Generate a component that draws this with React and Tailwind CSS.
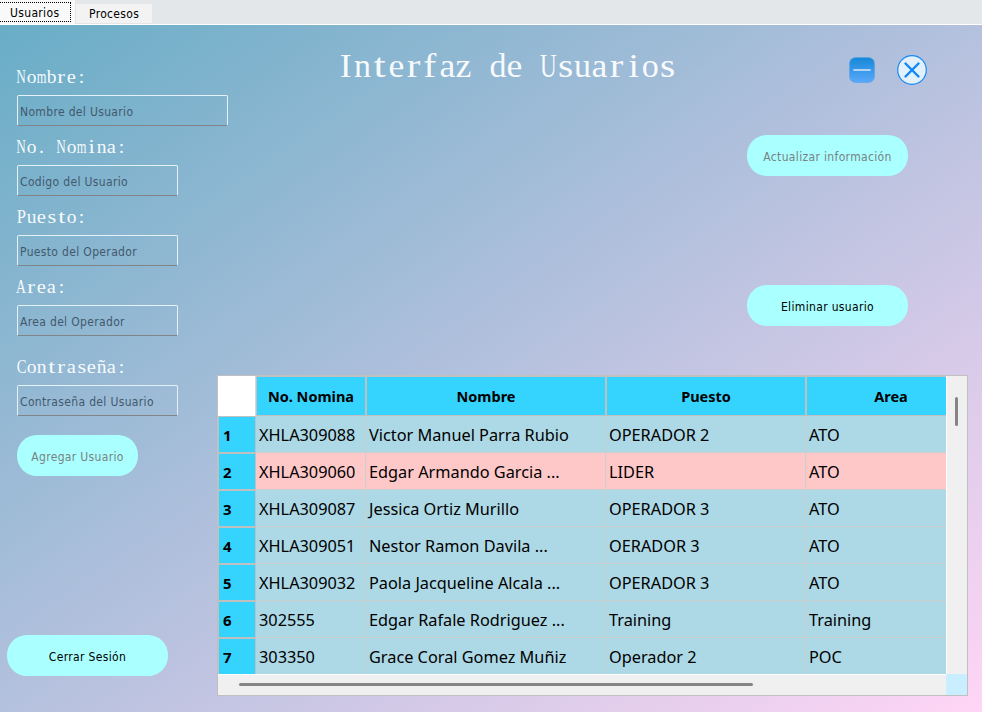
import React from "react";

const UI = "[font-family:'DejaVu_Sans_Condensed','DejaVu_Sans',sans-serif] [font-stretch:75%] tracking-[0.34px]";

// Horizontal scale that evens serif letters out over half-em cells
const SQUEEZE = { N: 0.68, m: 0.64, U: 0.68, C: 0.75, A: 0.7, P: 0.85, I: 1.05, r: 1.2, s: 1.15, t: 1.3, i: 1.15, f: 1.15, z: 1.05, e: 1.05, a: 1.05 };

function MonoText({ text, cell }) {
  return (
    <span className="inline-flex whitespace-pre tracking-normal [font-family:'Liberation_Serif',serif] text-white/95">
      {[...text].map((ch, i) => (
        <span key={i} className={`${cell} inline-flex justify-center`}>
          <span className="inline-block" style={{ transform: `scaleX(${SQUEEZE[ch] || 1})` }}>{ch}</span>
        </span>
      ))}
    </span>
  );
}

function Field({ label, placeholder, width = "w-[161px]", gap = "mb-[10px]" }) {
  return (
    <div className={gap}>
      <div className="-ml-[0.5px] flex h-[30px] items-start pt-[1px] text-[19.5px] leading-[21px]">
        <MonoText text={label} cell="w-[10px]" />
      </div>
      <div className={`${width} flex h-[31px] items-center rounded-[2px] border border-[#e4f1f6] border-b-[#808489] pl-[2px] pt-[2px] text-[12px] text-[#42596d]`}>
        <span className="whitespace-nowrap">{placeholder}</span>
      </div>
    </div>
  );
}

function Pill({ children, width = "w-[161px]", disabled }) {
  return (
    <div className={`${width} ${disabled ? "text-[#788285]" : "text-black"} flex h-[41px] items-center justify-center rounded-[20px] bg-[#aaffff] pt-[2px] text-[12px] whitespace-nowrap`}>
      {children}
    </div>
  );
}

const rows = [
  ["XHLA309088", "Victor Manuel Parra Rubio", "OPERADOR 2", "ATO"],
  ["XHLA309060", "Edgar Armando Garcia ...", "LIDER", "ATO"],
  ["XHLA309087", "Jessica Ortiz Murillo", "OPERADOR 3", "ATO"],
  ["XHLA309051", "Nestor Ramon Davila ...", "OERADOR 3", "ATO"],
  ["XHLA309032", "Paola Jacqueline Alcala ...", "OPERADOR 3", "ATO"],
  ["302555", "Edgar Rafale Rodriguez ...", "Training", "Training"],
  ["303350", "Grace Coral Gomez Muñiz", "Operador 2", "POC"],
];
const headers = ["No. Nomina", "Nombre", "Puesto", "Area"];
const COLS = "grid grid-cols-[38px_110px_240px_200px_170px]";

function UserTable() {
  return (
    <div className="grid h-[321px] w-[751px] grid-cols-[728px_21px] grid-rows-[298px_21px] border border-[#c0c0c0] tracking-normal [font-family:'Noto_Sans',sans-serif]">
      <div className="overflow-hidden bg-[#add8e6]">
        <div className={`${COLS} h-[40px] w-[758px] text-[14.5px] font-bold`}>
          <div className="border-r border-[#d8d8d8] bg-white" />
          {headers.map((h) => (
            <div key={h} className="flex items-center justify-center border border-[#c0c0c0] bg-[#35d4ff] pt-px">{h}</div>
          ))}
        </div>
        {rows.map((r, i) => (
          <div key={i} className={`${COLS} h-[37px] w-[758px] text-[16.3px] ${i === 1 ? "bg-[#ffc8c8]" : "bg-[#add8e6]"}`}>
            <div className="flex items-center border border-[#c0c0c0] bg-[#35d4ff] pl-1 pt-[2px] text-[15px] font-bold">{i + 1}</div>
            {r.map((c, j) => (
              <div key={j} className="flex items-center whitespace-nowrap border-b border-r border-[#cbcfd0] pl-[3px] pt-[2px]">{c}</div>
            ))}
          </div>
        ))}
      </div>
      <div className="border-l border-white bg-[#f0f0f0] pl-2 pt-[21px]">
        <div className="h-[29px] w-[3px] rounded-full bg-[#858585]" />
      </div>
      <div className="border-t border-white bg-[#f0f0f0] pl-[21px] pt-2">
        <div className="h-[3px] w-[514px] rounded-full bg-[#858585]" />
      </div>
      <div className="bg-[#c8eeff]" />
    </div>
  );
}

export default function App() {
  return (
    <div className={`${UI} h-[712px] w-[982px] overflow-hidden text-[12px]`}>
      <div className="flex h-[25px] items-start border-b border-white bg-[#e3e7ea]">
        <div className="h-6 w-[75px] bg-[#f9f9f9] pt-[2px]">
          <div className="flex h-5 w-[71px] items-center border border-l-0 border-dotted border-black pl-[10px] pt-[2px]">Usuarios</div>
        </div>
        <div className="mt-[3px] flex h-[21px] w-[77px] items-center border border-r-0 border-[#e5e5e5] bg-[#f3f3f3] pl-[13px]">Procesos</div>
      </div>
      <div className="flex h-[687px] bg-[linear-gradient(to_bottom_right,#69adc6,#ffd5f5)]">
        <div className="flex w-[217px] shrink-0 flex-col pl-[17px] pt-[40px]">
          <Field label="Nombre:" placeholder="Nombre del Usuario" width="w-[211px]" gap="mb-[9px]" />
          <Field label="No. Nomina:" placeholder="Codigo del Usuario" gap="mb-[9px]" />
          <Field label="Puesto:" placeholder="Puesto del Operador" gap="mb-[9px]" />
          <Field label="Area:" placeholder="Area del Operador" gap="mb-[19px]" />
          <Field label="Contraseña:" placeholder="Contraseña del Usuario" gap="mb-[19px]" />
          <Pill width="w-[121px]" disabled>Agregar Usuario</Pill>
          <div className="-ml-[10px] mt-[159px]"><Pill>Cerrar Sesión</Pill></div>
        </div>
        <div className="flex w-[765px] flex-col">
          <div className="flex h-[110px] items-start pl-[120px] pt-[20px]">
            <div className="w-[512px] text-[34px] leading-[40px]">
              <MonoText text="Interfaz de Usuarios" cell="w-[16.95px]" />
            </div>
            <svg className="mt-[12px]" width="26" height="26" viewBox="0 0 26 26">
              <defs>
                <linearGradient id="minbg" x1="0" y1="0" x2="0" y2="1">
                  <stop offset="0" stopColor="#1688d8" />
                  <stop offset="1" stopColor="#5aa8fa" />
                </linearGradient>
              </defs>
              <rect x="0.5" y="0.5" width="25" height="25" rx="6" fill="url(#minbg)" stroke="#5aa2e8" strokeOpacity="0.6" />
              <path d="M5 13h16" stroke="#b4d2f2" strokeWidth="1.8" strokeLinecap="round" />
            </svg>
            <svg className="ml-[22px] mt-[10px]" width="30" height="30" viewBox="0 0 30 30">
              <circle cx="15" cy="15" r="14.3" fill="#e2f0fc" stroke="#1989f5" strokeWidth="1.2" />
              <path d="M8.5 8.5L21.5 21.5M21.5 8.5L8.5 21.5" stroke="#0d86fa" strokeWidth="2.4" strokeLinecap="round" />
            </svg>
          </div>
          <div className="flex flex-col gap-[109px] pl-[530px]">
            <Pill disabled>Actualizar información</Pill>
            <Pill>Eliminar usuario</Pill>
          </div>
          <div className="mt-[49px]"><UserTable /></div>
        </div>
      </div>
    </div>
  );
}
